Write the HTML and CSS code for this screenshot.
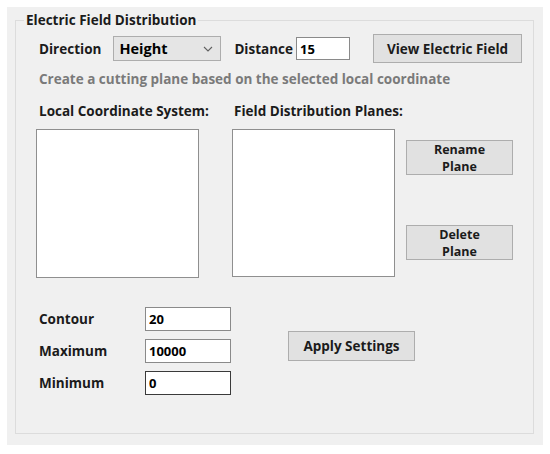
FILE: index.html
```html
<!DOCTYPE html>
<html>
<head>
    <title>Electric Field Distribution</title>
    <link rel="stylesheet" href="styles.css">
</head>
<body>
    <div class="panel">
        <div class="group">
            <span class="group-title">Electric Field Distribution</span>

            <div class="top-row">
                <span class="label">Direction</span>
                <div class="combo">
                    <span>Height</span>
                    <svg class="chevron" width="10" height="6" viewBox="0 0 10 6">
                        <path d="M1 1 L5 5 L9 1" fill="none" stroke="#606060" stroke-width="1.1"/>
                    </svg>
                </div>
                <span class="label distance-label">Distance</span>
                <input type="text" class="field distance" value="15">
                <button class="btn view-btn">View Electric Field</button>
            </div>

            <div class="hint">Create a cutting plane based on the selected local coordinate</div>

            <div class="list-labels">
                <span class="label list-label">Local Coordinate System:</span>
                <span class="label list-label">Field Distribution Planes:</span>
            </div>

            <div class="lists">
                <div class="listbox"></div>
                <div class="listbox second"></div>
                <div class="plane-buttons">
                    <button class="btn plane-btn">Rename<br>Plane</button>
                    <button class="btn plane-btn">Delete<br>Plane</button>
                </div>
            </div>

            <div class="settings">
                <div class="settings-grid">
                    <span class="label">Contour</span>
                    <input type="text" class="field value" value="20">
                    <span class="label">Maximum</span>
                    <input type="text" class="field value" value="10000">
                    <span class="label">Minimum</span>
                    <input type="text" class="field value active" value="0">
                </div>
                <button class="btn apply-btn">Apply Settings</button>
            </div>
        </div>
    </div>
</body>
</html>
```

FILE: styles.css
```css
body {
    margin: 0;
    background-color: #ffffff;
    font-family: "Open Sans", "Noto Sans", sans-serif;
    font-size: 13.5px;
    font-weight: bold;
    color: #1b1b1b;
}
.panel {
    margin: 7px;
    width: 536px;
    height: 438px;
    padding: 13px 9px 11px 8px;
    box-sizing: border-box;
    background-color: #f0f0f0;
}
.group {
    position: relative;
    height: 100%;
    border: 1px solid #dcdcdc;
    box-sizing: border-box;
    padding: 13px 0 0 23px;
}
.group-title {
    position: absolute;
    top: -10px;
    left: 8px;
    padding: 0 2px;
    background-color: #f0f0f0;
    line-height: 18px;
}
.label {
    line-height: 18px;
    white-space: nowrap;
}
.top-row {
    display: flex;
    align-items: center;
    height: 29px;
}
.combo {
    display: flex;
    align-items: center;
    justify-content: space-between;
    margin-left: 12px;
    width: 108px;
    height: 25px;
    padding: 0 7px 0 5px;
    box-sizing: border-box;
    background-color: #e5e5e5;
    border: 1px solid #adadad;
    font-size: 14.5px;
    color: #000;
}
.distance-label {
    margin-left: 13px;
}
.field {
    height: 23px;
    padding: 0 3px;
    box-sizing: border-box;
    border: 1px solid #8a8a8a;
    background-color: #fff;
    font-family: inherit;
    font-size: 13px;
    font-weight: bold;
    color: #000;
    outline: none;
}
.distance {
    margin-left: 3px;
    width: 54px;
}
.btn {
    font-family: inherit;
    font-size: 13.5px;
    font-weight: bold;
    color: #1b1b1b;
    background-color: #e1e1e1;
    border: 1px solid #adadad;
    padding: 0;
    line-height: 16px;
}
.view-btn {
    margin-left: 23px;
    width: 149px;
    height: 29px;
}
.hint {
    margin-top: 7px;
    line-height: 18px;
    color: #7a7a7a;
}
.list-labels {
    display: flex;
    margin-top: 14px;
}
.list-label {
    width: 195px;
}
.lists {
    display: flex;
    margin-top: 9px;
    margin-left: -3px;
}
.listbox {
    width: 163px;
    height: 149px;
    box-sizing: border-box;
    border: 1px solid #8f8f8f;
    background-color: #fff;
}
.second {
    margin-left: 33px;
    height: 148px;
}
.plane-buttons {
    display: flex;
    flex-direction: column;
    gap: 50px;
    margin-left: 11px;
    padding-top: 11px;
}
.plane-btn {
    width: 107px;
    height: 35px;
    font-size: 12.5px;
    line-height: 17px;
}
.settings {
    display: flex;
    align-items: flex-start;
    margin-top: 29px;
}
.settings-grid {
    display: grid;
    grid-template-columns: 106px 86px;
    row-gap: 8px;
    align-items: center;
}
.value {
    width: 86px;
    height: 24px;
}
.active {
    border-color: #3a3a3a;
}
.apply-btn {
    margin-left: 57px;
    margin-top: 24px;
    width: 127px;
    height: 30px;
}
```
